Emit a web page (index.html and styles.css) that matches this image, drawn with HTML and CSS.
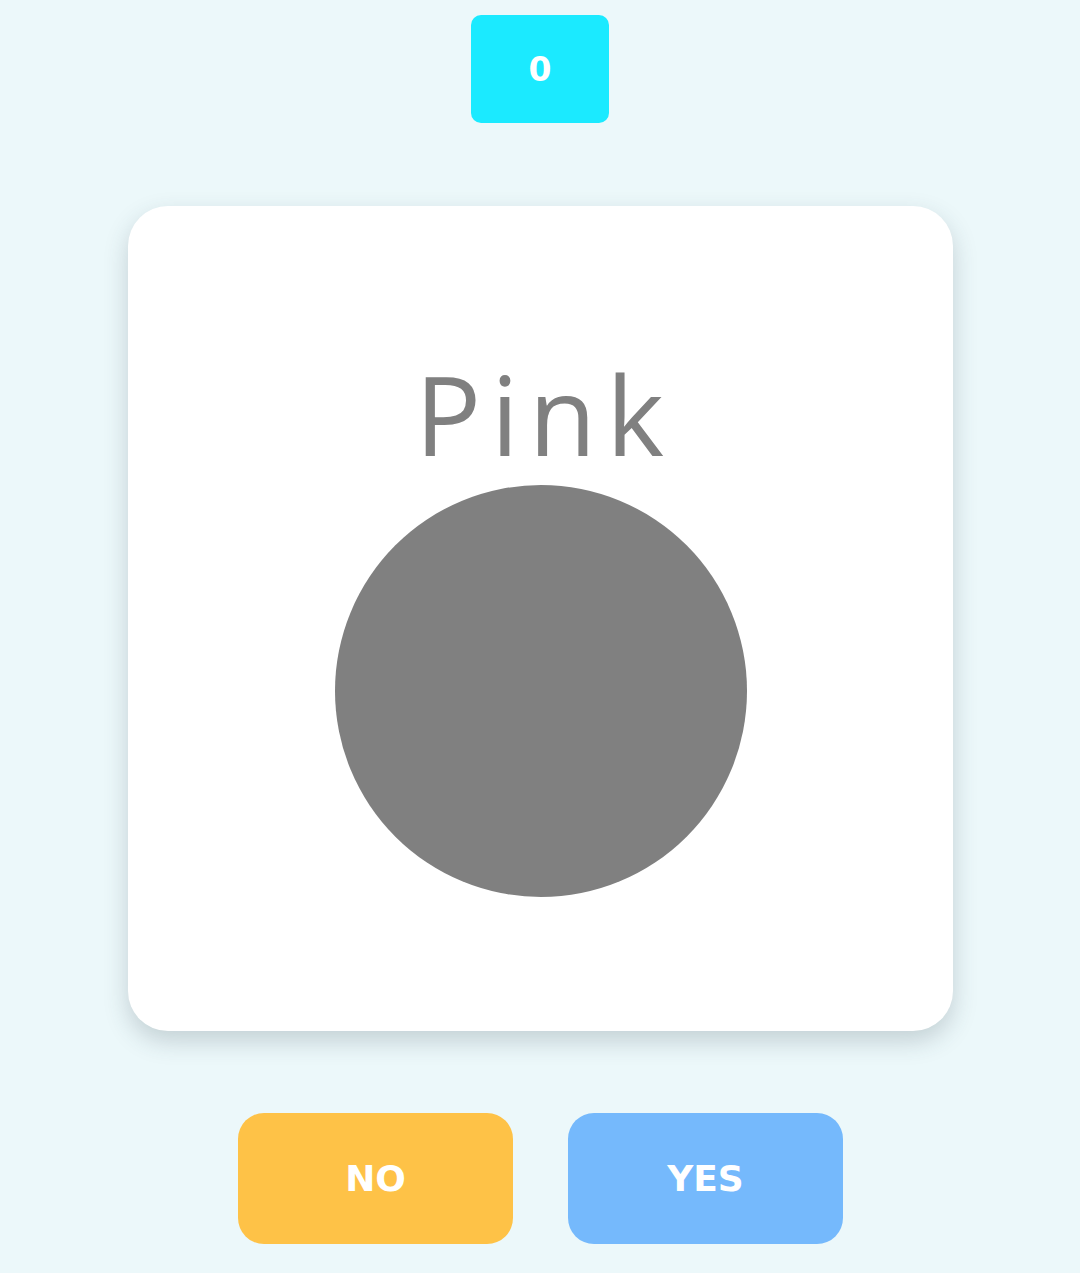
FILE: index.html
```html
<!DOCTYPE html>
<html>
<head>
<meta charset="utf-8">
<link rel="stylesheet" href="styles.css">
</head>
<body>
<div class="app">
  <div class="counter">0</div>
  <div class="card">
    <div class="word">Pink</div>
    <div class="circle"></div>
  </div>
  <div class="buttons">
    <button class="btn btn-no">NO</button>
    <button class="btn btn-yes">YES</button>
  </div>
</div>
</body>
</html>
```
FILE: styles.css
```css
html, body {
  margin: 0;
  padding: 0;
  background: #ecf8fa;
  font-family: "Open Sans", "DejaVu Sans", sans-serif;
}
.app {
  display: flex;
  flex-direction: column;
  align-items: center;
  padding-top: 15px;
}
.counter {
  width: 138px;
  height: 108px;
  border-radius: 10px;
  background: #1beaff;
  color: #ffffff;
  font-family: "DejaVu Sans", sans-serif;
  font-weight: 700;
  font-size: 33px;
  display: flex;
  align-items: center;
  justify-content: center;
}
.card {
  margin-top: 83px;
  width: 825px;
  height: 825px;
  box-sizing: border-box;
  border-radius: 40px;
  background: #ffffff;
  box-shadow: 0 10px 24px rgba(50, 70, 80, 0.22);
  display: flex;
  flex-direction: column;
  align-items: center;
  padding-top: 142px;
  margin-left: 1px;
}
.word {
  font-family: "Open Sans", sans-serif;
  font-size: 110px;
  line-height: 130px;
  letter-spacing: 10px;
  padding-left: 8px;
  color: #808080;
  font-weight: 400;
}
.circle {
  margin-top: 7px;
  width: 412px;
  height: 412px;
  border-radius: 50%;
  background: #808080;
}
.buttons {
  margin-top: 82px;
  display: flex;
  gap: 55px;
  margin-left: 1px;
}
.btn {
  width: 275px;
  height: 131px;
  border: none;
  border-radius: 26px;
  color: #ffffff;
  font-family: "DejaVu Sans", sans-serif;
  font-weight: 700;
  font-size: 36px;
  padding: 0;
}
.btn-no { background: #fec247; }
.btn-yes { background: #75b9fc; }
```
